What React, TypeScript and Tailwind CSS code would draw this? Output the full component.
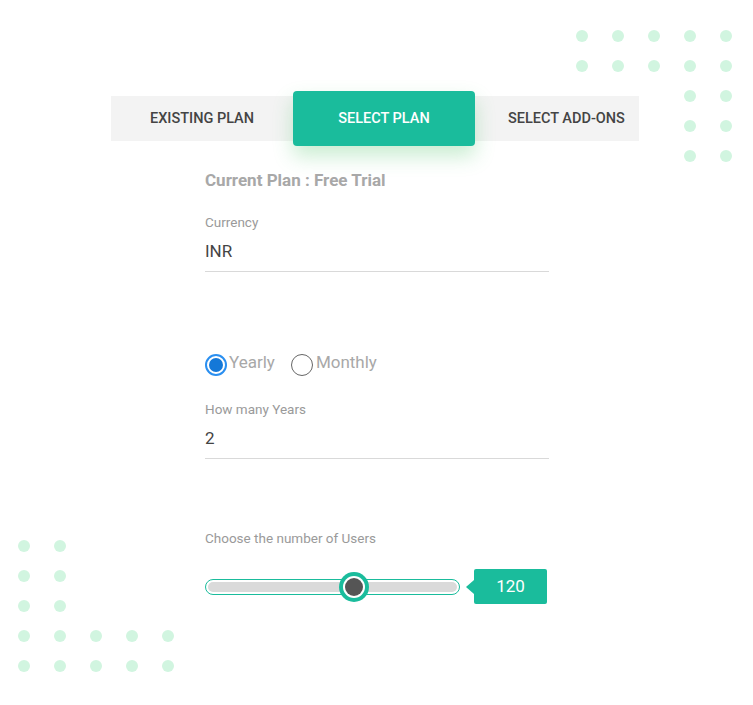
import React from 'react';

const Dot = () => <div className="w-[12px] h-[12px] rounded-full bg-[#d1f5e0]" />;
const Gap = () => <div className="w-[12px] h-[12px]" />;

const topRight = [
  [1, 1, 1, 1, 1],
  [1, 1, 1, 1, 1],
  [0, 0, 0, 1, 1],
  [0, 0, 0, 1, 1],
  [0, 0, 0, 1, 1],
];
const bottomLeft = [
  [1, 1, 0, 0, 0],
  [1, 1, 0, 0, 0],
  [1, 1, 0, 0, 0],
  [1, 1, 1, 1, 1],
  [1, 1, 1, 1, 1],
];

const DotGrid = ({ rows }: { rows: number[][] }) => (
  <div className="grid grid-cols-5 gap-x-[24px] gap-y-[18px]">
    {rows.flat().map((v, i) => (v ? <Dot key={i} /> : <Gap key={i} />))}
  </div>
);

const Field = ({ label, value }: { label: string; value: string }) => (
  <div>
    <div className="text-[13.5px] leading-[18px] text-[#9a9a9a]">{label}</div>
    <div className="mt-[10px] text-[17px] leading-[20px] text-[#444] pb-[10px] border-b border-[#d9d9d9]">{value}</div>
  </div>
);

export default function App() {
  return (
    <div className="relative w-[753px] h-[705px] bg-white overflow-hidden" style={{ fontFamily: 'Roboto, "Liberation Sans", sans-serif' }}>
      {/* decorative dots */}
      <div className="absolute left-[576px] top-[30px]">
        <DotGrid rows={topRight} />
      </div>
      <div className="absolute left-[18px] top-[540px]">
        <DotGrid rows={bottomLeft} />
      </div>

      <div className="relative pt-[96px] pl-[111px]">
        {/* tabs */}
        <div className="flex w-[528px] h-[45px] bg-[#f3f3f3]">
          <div className="w-[182px] flex items-center justify-center text-[14.5px] font-medium text-[#444]">EXISTING PLAN</div>
          <div className="w-[182px] -my-[5px] rounded-[4px] bg-[#1abc9c] flex items-center justify-center text-[14.5px] font-medium text-white shadow-[0_10px_20px_rgba(60,190,90,0.28)]">SELECT PLAN</div>
          <div className="flex-1 flex items-center pl-[33px] text-[14.5px] font-medium text-[#444]">SELECT ADD-ONS</div>
        </div>

        {/* form */}
        <div className="ml-[94px] w-[344px] pt-[29px]">
          <div className="text-[17px] leading-[20px] font-bold text-[#a8a8a8]">Current Plan : Free Trial</div>

          <div className="mt-[23px]">
            <Field label="Currency" value="INR" />
          </div>

          <div className="mt-[82px] flex items-center">
            <div className="flex items-center">
              <div className="w-[22px] h-[22px] rounded-full border-[2px] border-[#2a8ff0] flex items-center justify-center">
                <div className="w-[14px] h-[14px] rounded-full bg-[#1478d8]" />
              </div>
              <span className="ml-[2px] -mt-[4px] text-[17px] text-[#a8a8a8]">Yearly</span>
            </div>
            <div className="flex items-center ml-[16px]">
              <div className="w-[22px] h-[22px] rounded-full border-[1.5px] border-[#666]" />
              <span className="ml-[3px] -mt-[4px] text-[17px] text-[#a8a8a8]">Monthly</span>
            </div>
          </div>

          <div className="mt-[24px]">
            <Field label="How many Years" value="2" />
          </div>

          <div className="mt-[70px] text-[13.5px] leading-[18px] text-[#9a9a9a]">Choose the number of Users</div>

          {/* slider */}
          <div className="mt-[22px] flex items-center">
            <div className="relative w-[255px] h-[16px] rounded-full border border-[#1abc9c] bg-white p-[2px]">
              <div className="h-full rounded-full bg-[#dadada]" />
              <div className="absolute left-[133px] top-1/2 -translate-y-1/2 w-[30px] h-[30px] rounded-full bg-[#1abc9c] p-[4px]">
                <div className="w-full h-full rounded-full bg-white p-[2px]">
                  <div className="w-full h-full rounded-full bg-[#555]" />
                </div>
              </div>
            </div>
            <div className="ml-[6px] w-0 h-0 border-y-[7px] border-y-transparent border-r-[8px] border-r-[#1abc9c]" />
            <div className="w-[73px] h-[35px] rounded-[2px] bg-[#1abc9c] flex items-center justify-center text-[17px] text-white">120</div>
          </div>
        </div>
      </div>
    </div>
  );
}
